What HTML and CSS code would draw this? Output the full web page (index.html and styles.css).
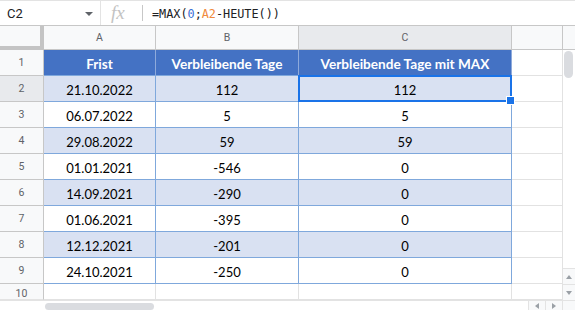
FILE: index.html
```html
<!DOCTYPE html>
<html lang="de">
<head>
<meta charset="utf-8">
<title>Sheet</title>
<link rel="stylesheet" href="styles.css">
</head>
<body>
<div class="app">
  <div class="formula-bar">
    <div class="namebox"><span class="name">C2</span><span class="caret"></span></div>
    <div class="fx">fx</div>
    <div class="formula">=MAX(<span class="num">0</span>;<span class="ref">A2</span>-HEUTE())</div>
  </div>
  <div class="grid">
    <div class="corner"></div>
    <div class="colh">A</div>
    <div class="colh">B</div>
    <div class="colh sel">C</div>
    <div class="colh">&nbsp;</div>
    <div class="vscroll">
      <div class="vs-head"></div>
      <div class="vs-track"><div class="vs-thumb"></div></div>
      <div class="vs-btn"><span class="tri up"></span></div>
      <div class="vs-btn"><span class="tri down"></span></div>
    </div>

    <div class="rowh">1</div>
    <div class="c th">Frist</div>
    <div class="c th">Verbleibende Tage</div>
    <div class="c th">Verbleibende Tage mit MAX</div>
    <div class="c empty"></div>

    <div class="rowh sel">2</div>
    <div class="c band">21.10.2022</div>
    <div class="c band">112</div>
    <div class="c band active">112</div>
    <div class="c empty"></div>

    <div class="rowh">3</div>
    <div class="c">06.07.2022</div>
    <div class="c">5</div>
    <div class="c">5</div>
    <div class="c empty"></div>

    <div class="rowh">4</div>
    <div class="c band">29.08.2022</div>
    <div class="c band">59</div>
    <div class="c band">59</div>
    <div class="c empty"></div>

    <div class="rowh">5</div>
    <div class="c">01.01.2021</div>
    <div class="c">-546</div>
    <div class="c">0</div>
    <div class="c empty"></div>

    <div class="rowh">6</div>
    <div class="c band">14.09.2021</div>
    <div class="c band">-290</div>
    <div class="c band">0</div>
    <div class="c empty"></div>

    <div class="rowh">7</div>
    <div class="c">01.06.2021</div>
    <div class="c">-395</div>
    <div class="c">0</div>
    <div class="c empty"></div>

    <div class="rowh">8</div>
    <div class="c band">12.12.2021</div>
    <div class="c band">-201</div>
    <div class="c band">0</div>
    <div class="c empty"></div>

    <div class="rowh">9</div>
    <div class="c">24.10.2021</div>
    <div class="c">-250</div>
    <div class="c">0</div>
    <div class="c empty"></div>

    <div class="rowh last">10</div>
    <div class="c empty last"></div>
    <div class="c empty last"></div>
    <div class="c empty last"></div>
    <div class="c empty last"></div>
  </div>
  <div class="hscroll">
    <div class="hs-left"></div>
    <div class="hs-track"><div class="hs-thumb"></div></div>
    <div class="hs-btn"><span class="tri left"></span></div>
    <div class="hs-btn"><span class="tri right"></span></div>
    <div class="hs-corner"></div>
  </div>
</div>
</body>
</html>
```

FILE: styles.css
```css
* { box-sizing: border-box; }
html, body { margin: 0; padding: 0; background: #fff; }
body { width: 575px; height: 310px; overflow: hidden; font-family: Lato, "Liberation Sans", sans-serif; }

.app { width: 575px; height: 310px; display: flex; flex-direction: column; }

.formula-bar {
  height: 26px;
  flex: none;
  display: flex;
  align-items: center;
  border-top: 1px solid #e3e3e3;
  border-bottom: 1px solid #c7c7c7;
}
.namebox {
  width: 101px;
  height: 100%;
  display: flex;
  align-items: center;
  padding-left: 7px;
  padding-right: 7px;
  border-right: 1px solid #e3e3e3;
  margin: 0;
}
.name { font-family: Roboto, "Liberation Sans", sans-serif; font-size: 13px; color: #202124; flex: 1; }
.caret {
  width: 0; height: 0;
  border-left: 4px solid transparent;
  border-right: 4px solid transparent;
  border-top: 4px solid #5f6368;
  margin-top: 2px;
}
.fx {
  width: 42px;
  height: 16px;
  border-right: 1px solid #c7c7c7;
  font-family: "Liberation Serif", serif;
  font-style: italic;
  font-size: 19px;
  line-height: 16px;
  color: #c3c3c3;
  padding-left: 10px;
  letter-spacing: 0px;
}
.formula {
  padding-left: 9px;
  font-family: "DejaVu Sans Mono", monospace;
  font-size: 11.8px;
  color: #202124;
  padding-top: 1px;
}
.formula .num { color: #3b6fd6; }
.formula .ref { color: #f08a3c; }

.grid {
  display: grid;
  grid-template-columns: 44px 112px 143px 213px 51px 12px;
  grid-template-rows: 24px repeat(9, 26px) 16px;
  flex: none;
}

.corner {
  background: #f8f9fa;
  border-right: 4px solid #c4c4c4;
  border-bottom: 4px solid #c4c4c4;
}
.colh {
  background: #f8f9fa;
  border-right: 1px solid #c7c7c7;
  border-bottom: 1px solid #c7c7c7;
  font-family: Roboto, "Liberation Sans", sans-serif;
  font-size: 10.5px;
  color: #5f6368;
  display: flex;
  align-items: center;
  justify-content: center;
}
.colh.sel { background: #e8eaed; }

.rowh {
  background: #f8f9fa;
  border-right: 1px solid #c7c7c7;
  border-bottom: 1px solid #c7c7c7;
  font-family: Roboto, "Liberation Sans", sans-serif;
  font-size: 10.5px;
  color: #5f6368;
  display: flex;
  align-items: center;
  justify-content: center;
}
.rowh.sel { background: #e8eaed; }
.rowh.last { align-items: flex-start; padding-top: 3px; border-bottom: 1px solid #e3e3e3; }

.c {
  border-right: 1px solid #7fa8dc;
  border-bottom: 1px solid #7fa8dc;
  display: flex;
  align-items: flex-end;
  justify-content: center;
  padding-bottom: 3px;
  font-size: 13px;
  line-height: 16px;
  color: #000;
  position: relative;
}
.c.band { background: #d9e1f2; }
.c.th {
  background: #4472c4;
  color: #fff;
  font-weight: bold;
  font-size: 13.6px;
  border-right-color: #8eaadb;
  border-bottom-color: #7fa8dc;
}
.c.empty { border-right-color: #e2e2e2; border-bottom-color: #e2e2e2; }
.c.last { border-bottom-color: #e2e2e2; border-right-color: #e2e2e2; }

.c.active::after {
  content: "";
  position: absolute;
  left: -1px; top: -1px; right: -1px; bottom: -1px;
  border: 2px solid #1a73e8;
}
.c.active::before {
  content: "";
  position: absolute;
  right: -4px; bottom: -4px;
  width: 7px; height: 7px;
  background: #1a73e8;
  border: 1px solid #fff;
  z-index: 2;
}

.vscroll {
  grid-column: 6;
  grid-row: 1 / span 11;
  display: flex;
  flex-direction: column;
}
.vs-head { height: 24px; background: #f8f9fa; border-bottom: 1px solid #c7c7c7; flex: none; }
.vs-track { flex: 1; padding: 1px 0 0 1px; }
.vs-thumb { width: 9px; height: 27px; background: #dadce0; border-radius: 5px; }
.vs-btn {
  height: 16px;
  flex: none;
  border-top: 1px solid #e3e3e3;
  background: #f8f9fa;
  display: flex;
  align-items: center;
  justify-content: center;
}
.tri { width: 0; height: 0; display: block; }
.tri.up { border-left: 3.5px solid transparent; border-right: 3.5px solid transparent; border-bottom: 4px solid #9aa0a6; }
.tri.down { border-left: 3.5px solid transparent; border-right: 3.5px solid transparent; border-top: 4px solid #9aa0a6; }
.tri.left { border-top: 3.5px solid transparent; border-bottom: 3.5px solid transparent; border-right: 4px solid #9aa0a6; }
.tri.right { border-top: 3.5px solid transparent; border-bottom: 3.5px solid transparent; border-left: 4px solid #9aa0a6; }

.hscroll {
  flex: 1;
  display: flex;
  border-top: 1px solid #e3e3e3;
}
.hs-left { width: 44px; flex: none; background: #fff; }
.hs-track { flex: 1; padding: 2px 0 0 1px; }
.hs-thumb { width: 109px; height: 7px; background: #dadce0; border-radius: 4px; }
.hs-btn {
  width: 17px;
  flex: none;
  border-left: 1px solid #e3e3e3;
  background: #f8f9fa;
  display: flex;
  align-items: center;
  justify-content: center;
}
.hs-corner { width: 13px; flex: none; background: #f8f9fa; border-left: 1px solid #e3e3e3; }
```
